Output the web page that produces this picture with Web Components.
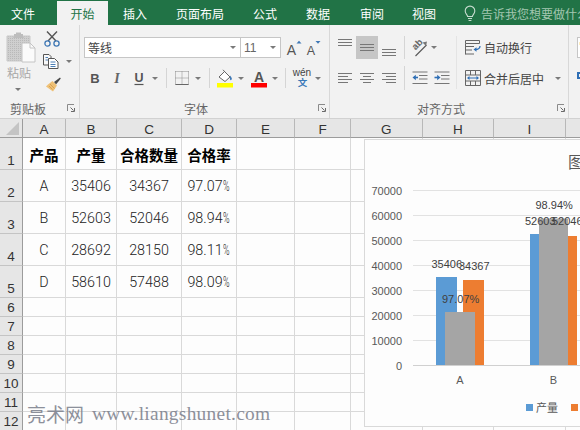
<!DOCTYPE html>
<html lang="zh">
<head>
<meta charset="utf-8">
<title>Excel</title>
<style>
html,body{margin:0;padding:0;width:580px;height:430px;overflow:hidden;background:#fff;font-family:"Liberation Sans","Noto Sans CJK SC",sans-serif}
xl-app{width:580px;height:430px}
</style>
</head>
<body>
<xl-app>
  <xl-tabs slot="tabs"></xl-tabs>
  <xl-ribbon slot="ribbon"></xl-ribbon>
  <xl-sheet slot="sheet"></xl-sheet>
</xl-app>
<script>
const CJK='"Liberation Sans","Noto Sans CJK SC",sans-serif';
function def(name,css,html,init){
  customElements.define(name,class extends HTMLElement{
    connectedCallback(){
      if(this.shadowRoot)return;
      const r=this.attachShadow({mode:'open'});
      r.innerHTML='<style>'+css+'</style>'+(typeof html==='function'?html(this):html);
      if(init)init(r,this);
    }
  });
}
def('xl-app',':host{display:flex;flex-direction:column;overflow:hidden}','<slot name="tabs"></slot><slot name="ribbon"></slot><slot name="sheet"></slot>');

/* ---------- tabs ---------- */
def('xl-tab',`:host{display:flex;flex:none;align-items:center;justify-content:center;height:24px;margin-top:1px;font:12px ${CJK};color:#fff;box-sizing:border-box;white-space:nowrap}
:host([active]){background:#f2f2f2;color:#217346}`,'<slot></slot>');
def('xl-tabs',`:host{display:flex;height:25px;background:#217346;overflow:hidden;flex:none}
.tell{display:flex;flex:none;align-items:center;color:#a3c6b0;font:12px ${CJK};white-space:nowrap;gap:4px;margin-left:27px;padding-top:1px}
svg{display:block}`,`
<xl-tab style="width:46px">文件</xl-tab>
<xl-tab active style="width:51px;margin-left:11px">开始</xl-tab>
<xl-tab style="width:24px;margin-left:15px">插入</xl-tab>
<xl-tab style="width:48px;margin-left:29px">页面布局</xl-tab>
<xl-tab style="width:24px;margin-left:29px">公式</xl-tab>
<xl-tab style="width:24px;margin-left:29px">数据</xl-tab>
<xl-tab style="width:24px;margin-left:30px">审阅</xl-tab>
<xl-tab style="width:24px;margin-left:28px">视图</xl-tab>
<div class="tell"><svg width="14" height="17" viewBox="0 0 14 17" fill="none" stroke="#c7dccf" stroke-width="1.1"><path d="M4.6 11.5C4.4 9.6 2.2 8.6 2.2 5.9A4.8 4.8 0 0 1 11.8 5.9C11.8 8.6 9.6 9.6 9.4 11.5Z"/><path d="M5 13.5H9M5.6 15.5H8.4"/></svg><span>告诉我您想要做什么</span></div>`);

/* ---------- generic ribbon pieces ---------- */
def('xl-caret',`:host{display:flex;align-items:center;justify-content:center;flex:none;height:100%}
i{display:block;width:0;height:0;border:3px solid transparent;border-top:3px solid #7a7a7a;border-bottom:0}`,'<i></i>');
def('xl-vsep',`:host{display:flex;justify-content:center;flex:none;height:100%}
i{display:block;width:1px;background:#d5d5d5;height:100%}`,'<i></i>');
def('xl-launch',`:host{display:block;flex:none;width:8px;height:8px}svg{display:block}`,
 `<svg width="8" height="8" viewBox="0 0 8 8" fill="none" stroke="#8a8a8a"><path d="M.5 7V.5H7"/><path d="M3.5 3.5L6.5 6.5" stroke="#6a6a6a"/><path d="M7.5 4V7.5H4" stroke="#6a6a6a"/></svg>`);
def('xl-group',`:host{display:flex;flex-direction:column;flex:none;height:93px;box-sizing:border-box;border-right:1px solid #d8d8d8}
.b{flex:none;height:74px;display:flex}
.l{display:flex;align-items:center;flex:none;height:18px;font:12px ${CJK};color:#666;box-sizing:border-box}
.l span{flex:1}`,
 t=>`<div class="b"><slot></slot></div><div class="l" style="padding-left:${t.getAttribute('lp')}px;padding-right:${t.getAttribute('rp')}px"><span>${t.getAttribute('label')}</span><xl-launch></xl-launch></div>`);
def('xl-combo',`:host{display:flex;align-items:center;box-sizing:border-box;height:21px;background:#fff;border:1px solid #c6c6c6;font:12px ${CJK};color:#444;flex:none;padding-left:3px}
span{flex:1}xl-caret{width:14px}`,`<span><slot></slot></span><xl-caret></xl-caret>`);
def('xl-row',`:host{display:flex;flex:none}`,'<slot></slot>');

const I={
 paste:`<svg width="30" height="32" viewBox="0 0 30 32"><defs><pattern id="d" width="2" height="2" patternUnits="userSpaceOnUse"><rect width="2" height="2" fill="#cfcfcf"/><rect width="1" height="1" fill="#b9b9b9"/></pattern></defs><path d="M1 4H24V29H1Z" fill="url(#d)" stroke="#c9c9c9"/><path d="M8 4V2H10V0.5H15V2H17V4L18 6H7Z" fill="#bdbdbd"/><path d="M16 11H24L29 16V30H16Z" fill="#fbfbfb" stroke="#c4c4c4"/><path d="M24 11V16H29" fill="none" stroke="#c4c4c4"/></svg>`,
 cut:`<svg width="16" height="16" viewBox="0 0 16 16" fill="none"><path d="M4 10L13 .5M12 10L3 .5" stroke="#555" stroke-width="1.4"/><circle cx="3.5" cy="12.5" r="2.6" stroke="#3f78b5" stroke-width="1.3"/><circle cx="12.5" cy="12.5" r="2.6" stroke="#3f78b5" stroke-width="1.3"/></svg>`,
 copy:`<svg width="16" height="15" viewBox="0 0 16 15" fill="none" stroke="#555"><path d="M.5.5H6L8 2.5V11H.5Z" fill="#f8f8f8"/><path d="M5.5 4.5H11.5L15 8V14.5H5.5Z" fill="#fff"/><path d="M2.5 3.5H5M2.5 6H5M7.5 8H12.5M7.5 10.5H12.5M7.5 12.5H12.5" stroke="#4c7fb5"/></svg>`,
 brush:`<svg width="16" height="16" viewBox="0 0 16 16"><path d="M9 5L15 .5 15.8 1.6 11 7.5Z" fill="#4a4a4a"/><path d="M7.5 4L12 8.5 8 14.5 1 9.5 3 7.5Z" fill="#efc176"/><path d="M5 7L9.5 11.5M4 9L7.5 12.5" stroke="#d39a4a" stroke-width=".8"/></svg>`,
 bold:`<svg width="12" height="14" viewBox="0 0 12 14"><text x="6" y="12" text-anchor="middle" font-family="Liberation Sans" font-weight="700" font-size="13" fill="#555">B</text></svg>`,
 ital:`<svg width="12" height="14" viewBox="0 0 12 14"><text x="6" y="12" text-anchor="middle" font-family="Liberation Serif" font-style="italic" font-weight="700" font-size="14" fill="#666">I</text></svg>`,
 under:`<svg width="12" height="16" viewBox="0 0 12 16"><text x="6" y="11.5" text-anchor="middle" font-family="Liberation Sans" font-weight="700" font-size="12.5" fill="#555">U</text><path d="M1.5 14.5H10.5" stroke="#555" stroke-width="1.2"/></svg>`,
 border:`<svg width="14" height="14" viewBox="0 0 14 14" fill="none"><path d="M.5.5H13.5M.5.5V13.5M13.5.5V13.5M.5 7H13.5M7 .5V13.5" stroke="#8a8a8a" stroke-dasharray="1 1"/><path d="M.5 13.5H13.5" stroke="#666"/></svg>`,
 fill:`<svg width="16" height="19" viewBox="0 0 16 19"><path d="M2 8L7.5 2.5 13 8 8 12.5Z" fill="#fff" stroke="#666"/><path d="M6 .8L8 3" stroke="#666"/><path d="M13 6.5C14.5 8.5 15.5 9.5 14.5 10.8S12.5 10.5 13 8Z" fill="#3f78b5"/><rect y="14" width="16" height="4.5" fill="#ffff00"/></svg>`,
 color:`<svg width="16" height="19" viewBox="0 0 16 19"><text x="8" y="13" text-anchor="middle" font-family="Liberation Sans" font-weight="700" font-size="14" fill="#555">A</text><rect y="14" width="16" height="4.5" fill="#ff0000"/></svg>`,
 wen:`<svg width="20" height="20" viewBox="0 0 20 20"><text x="10" y="7.5" text-anchor="middle" font-family="Liberation Sans" font-size="10" fill="#444">wén</text><text x="10.5" y="18" text-anchor="middle" font-family="Noto Sans CJK SC" font-size="9.5" font-weight="700" fill="#3a78b8">文</text></svg>`,
 grow:`<svg width="16" height="18" viewBox="0 0 16 18"><text x="5.5" y="16" text-anchor="middle" font-family="Liberation Sans" font-size="14" fill="#555">A</text><path d="M10.5 4.5L13 1.8 15.5 4.5Z" fill="#3f78b5"/></svg>`,
 shrink:`<svg width="15" height="18" viewBox="0 0 15 18"><text x="5" y="16" text-anchor="middle" font-family="Liberation Sans" font-size="12.5" fill="#555">A</text><path d="M9.5 2H14.5L12 4.8Z" fill="#3f78b5"/></svg>`,
 vt:l(3,6,9,14),vm:l(8,11,14,14),vb:l(13,16,19,14),
 al:al([14,10,14,10],0),ac:al([14,8,14,8],1),ar:al([14,10,14,10],2),
 orient:`<svg width="17" height="18" viewBox="0 0 17 18" fill="none"><text transform="translate(4.5 11.5) rotate(-45)" font-family="Liberation Sans" font-size="9.5" font-weight="700" fill="#666">ab</text><path d="M4.5 17L15.5 6" stroke="#555" stroke-width="1.1"/><path d="M11.5 3.5L16 2.5 15 7Z" fill="#777"/></svg>`,
 outd:`<svg width="16" height="14" viewBox="0 0 16 14" fill="none"><path d="M.5 1H15.5M7 4.5H15.5M7 8H15.5M.5 12.5H15.5" stroke="#777"/><path d="M6 6.5H2" stroke="#2f6fb5" stroke-width="1.6"/><path d="M.5 6.5L3.8 3.8V9.2Z" fill="#2f6fb5"/></svg>`,
 ind:`<svg width="16" height="14" viewBox="0 0 16 14" fill="none"><path d="M.5 1H15.5M7 4.5H15.5M7 8H15.5M.5 12.5H15.5" stroke="#777"/><path d="M.5 6.5H4" stroke="#2f6fb5" stroke-width="1.6"/><path d="M6.5 6.5L3.2 3.8V9.2Z" fill="#2f6fb5"/></svg>`,
 wrap:`<svg width="16" height="15" viewBox="0 0 16 15" fill="none"><path d="M.5.5H14.5V3.5H.5Z" stroke="#666"/><path d="M.5 3.5V14.5M.5 6.5H9M.5 10H7M.5 14H9" stroke="#666"/><path d="M15 6C15 9 13 9.5 10 9.5" stroke="#2f6fb5" stroke-width="1.3"/><path d="M8.5 9.5L11.5 7.3V11.7Z" fill="#2f6fb5"/></svg>`,
 merge:`<svg width="16" height="16" viewBox="0 0 16 16" fill="none"><path d="M.5.5H15.5V15.5H.5ZM.5 5H15.5M.5 11H15.5M5.5.5V5M10.5.5V5M5.5 11V15.5M10.5 11V15.5" stroke="#666"/><path d="M3 8H13" stroke="#2f6fb5"/><path d="M2 8L4.5 6V10ZM14 8L11.5 6V10Z" fill="#2f6fb5"/></svg>`
};
function l(a,b,c,w){return `<svg width="${w}" height="23" viewBox="0 0 ${w} 23" fill="none" stroke="#777"><path d="M0 ${a+.5}H${w}M0 ${b+.5}H${w}M0 ${c+.5}H${w}"/></svg>`}
function al(ws,m){let d='';ws.forEach((w,i)=>{const x=m==0?0:m==1?(14-w)/2:14-w;d+=`M${x} ${i*3+1.5}H${x+w}`});return `<svg width="14" height="13" viewBox="0 0 14 13" fill="none" stroke="#777"><path d="${d}"/></svg>`}

def('xl-ico',`:host{display:flex;align-items:center;justify-content:center;flex:none;height:100%;box-sizing:border-box}
:host([on]){background:#c6c6c6}svg{display:block}`,t=>I[t.getAttribute('n')]);

/* ---------- ribbon ---------- */
def('xl-ribbon',`:host{display:flex;height:94px;background:#f2f2f2;border-bottom:1px solid #d2d2d2;box-sizing:border-box;flex:none;overflow:hidden}
.clip{display:grid;grid-template-columns:41px 38px;width:79px}
.clipL{display:flex;flex-direction:column;align-items:flex-start;padding:7px 0 0 6px;box-sizing:border-box}
.clipL span{font:12px ${CJK};color:#a8a8a8;margin-top:2px;line-height:16px;margin-left:1px}
.clipL xl-caret{height:8px;width:24px;margin-top:3px}
.clipR{display:flex;flex-direction:column;padding-top:6px;box-sizing:border-box}
.clipR xl-row{height:16px}
.col{display:flex;flex-direction:column}
.font{padding:12px 0 0 4px;box-sizing:border-box;width:100%}
.r1{height:21px;margin-bottom:10px}
.r2{height:20px}
.combo1{width:157px}.combo2{width:41px;margin-left:-1px;color:#666}
.al{padding-left:4px;display:flex;width:100%;box-sizing:border-box}
.a1{height:23px;margin-top:11px}.a2{height:24px;margin-top:7px}
.txt{display:flex;align-items:center;gap:3px;font:12px ${CJK};color:#444;height:100%;white-space:nowrap}
.lsep{flex:none;margin:11px 3px 10px 3px;width:1px;background:#e4e4e4}
.rest{width:20px;flex:none;padding:12px 0 0 8px;box-sizing:border-box}
.box{height:21px;width:40px;background:#fff;border:1px solid #c6c6c6;box-sizing:border-box;font:12px ${CJK};color:#444;padding-left:1px;line-height:19px;white-space:nowrap;overflow:hidden}
.blue{display:block;width:12px;height:7px;border:2px solid #2f6fb5;margin-top:14px;box-sizing:border-box}`,`
<xl-group label="剪贴板" lp="10" rp="4" style="width:80px">
 <div class="clip">
  <div class="clipL"><xl-ico n="paste" style="height:32px"></xl-ico><span>粘贴</span><xl-caret></xl-caret></div>
  <div class="clipR">
   <xl-row style="margin-left:3px"><xl-ico n="cut"></xl-ico></xl-row>
   <xl-row style="margin:6px 0 0 2px"><xl-ico n="copy"></xl-ico><xl-caret style="width:20px"></xl-caret></xl-row>
   <xl-row style="margin:8px 0 0 4px"><xl-ico n="brush"></xl-ico></xl-row>
  </div>
 </div>
</xl-group>
<xl-group label="字体" lp="104" rp="3" style="width:250px">
 <div class="font">
  <xl-row class="r1"><xl-combo class="combo1">等线</xl-combo><xl-combo class="combo2">11</xl-combo>
   <xl-ico n="grow" style="width:22px;margin-left:2px"></xl-ico><xl-ico n="shrink" style="width:17px"></xl-ico></xl-row>
  <xl-row class="r2">
   <xl-ico n="bold" style="width:21px"></xl-ico><xl-ico n="ital" style="width:23px"></xl-ico><xl-ico n="under" style="width:21px"></xl-ico><xl-caret style="width:12px"></xl-caret>
   <xl-vsep style="width:10px"></xl-vsep>
   <xl-ico n="border" style="width:21px"></xl-ico><xl-caret style="width:12px"></xl-caret>
   <xl-vsep style="width:10px"></xl-vsep>
   <xl-ico n="fill" style="width:22px"></xl-ico><xl-caret style="width:10px"></xl-caret>
   <xl-ico n="color" style="width:25px"></xl-ico><xl-caret style="width:8px"></xl-caret>
   <xl-vsep style="width:12px"></xl-vsep>
   <xl-ico n="wen" style="width:22px"></xl-ico><xl-caret style="width:10px"></xl-caret>
  </xl-row>
 </div>
</xl-group>
<xl-group label="对齐方式" lp="87" rp="3" style="width:239px">
 <div class="al">
  <div class="col">
   <xl-row class="a1"><xl-ico n="vt" style="width:22px"></xl-ico><xl-ico n="vm" on style="width:22px"></xl-ico><xl-ico n="vb" style="width:22px"></xl-ico><xl-vsep style="width:8px"></xl-vsep><xl-ico n="orient" style="width:23px"></xl-ico><xl-caret style="width:6px"></xl-caret></xl-row>
   <xl-row class="a2"><xl-ico n="al" style="width:22px"></xl-ico><xl-ico n="ac" style="width:22px"></xl-ico><xl-ico n="ar" style="width:22px"></xl-ico><xl-vsep style="width:8px"></xl-vsep><xl-ico n="outd" style="width:23px"></xl-ico><xl-ico n="ind" style="width:22px"></xl-ico></xl-row>
  </div>
  <i class="lsep"></i>
  <div class="col" style="margin-left:5px">
   <xl-row class="a1"><div class="txt"><xl-ico n="wrap"></xl-ico><span>自动换行</span></div></xl-row>
   <xl-row class="a2"><div class="txt"><xl-ico n="merge"></xl-ico><span>合并后居中</span><xl-caret style="width:22px"></xl-caret></div></xl-row>
  </div>
 </div>
</xl-group>
<div class="rest"><div class="box">常规</div><i class="blue"></i></div>`);

/* ---------- sheet ---------- */
def('xl-sheet',`:host{display:block;position:relative;height:311px;overflow:hidden;flex:none;background:#fdfdfd}
.g{display:grid;grid-template-columns:23px 43px 51px 65px 55px 58px 56px 71.5px 71.5px 72px 72px;grid-template-rows:19px repeat(5,32px) repeat(7,19px);width:700px}
.g>div{box-sizing:border-box;border-right:1px solid #d9d9d9;border-bottom:1px solid #d9d9d9;display:flex;align-items:center;justify-content:center;font:300 14.3px Roboto,"Noto Sans CJK SC",sans-serif;color:#222;padding-top:1px}
.g>.h{background:#e6e6e6;border-right:1px solid #b8b8b8;border-bottom:1px solid #9c9c9c;font:13.5px ${CJK};color:#333;padding-top:2px}
.g>.rh{background:#e6e6e6;border-right:1px solid #9c9c9c;border-bottom:1px solid #c4c4c4;font:13.5px ${CJK};color:#333;align-items:flex-end;padding:0 0 1px}
.g>.b{font:700 14.5px ${CJK};color:#000}
.g>.corner{background:#e6e6e6;border-right:1px solid #9c9c9c;border-bottom:1px solid #9c9c9c;padding:0 3px 2px 0;align-items:flex-end;justify-content:flex-end}
.corner i{display:block;width:0;height:0;border-left:13px solid transparent;border-bottom:13px solid #c4c4c4}
.pc{display:inline-block;width:8px;transform:scaleX(.62);transform-origin:left center}
.wm{position:absolute;left:27px;top:282px;white-space:nowrap;color:#7d828e;opacity:.88;font:19.4px "Liberation Serif","Noto Sans CJK SC",serif;letter-spacing:.27px;line-height:26px;display:flex;gap:8px}
.wm b{font:400 19px "Noto Sans CJK SC",sans-serif;line-height:26px;letter-spacing:0}
xl-chart{position:absolute;left:364px;top:20px}`,`<div class="g"></div><xl-chart></xl-chart><div class="wm"><b>亮术网</b><span>www.liangshunet.com</span></div>`,
(r)=>{
 const g=r.querySelector('.g');
 const cols=['A','B','C','D','E','F','G','H','I',''];
 const data=[['产品','产量','合格数量','合格率'],['A','35406','34367','97.07%'],['B','52603','52046','98.94%'],['C','28692','28150','98.11%'],['D','58610','57488','98.09%']];
 let h='<div class="corner"><i></i></div>';
 cols.forEach(c=>h+=`<div class="h">${c}</div>`);
 for(let i=0;i<12;i++){
  h+=`<div class="rh">${i+1}</div>`;
  for(let j=0;j<10;j++){
   let v=(data[i]&&data[i][j])||'';
   if(v.endsWith('%'))v=v.slice(0,-1)+'<span class="pc">%</span>';
   h+=`<div class="${i==0&&j<4?'b':''}">${v}</div>`;
  }
 }
 g.innerHTML=h;
});

/* ---------- chart: free canvas, page coordinates in the viewBox ---------- */
def('xl-chart',`:host{display:block;width:217px;height:288px;background:#fdfdfd;box-sizing:border-box;border:1px solid #d9d9d9;border-right:0}
svg{display:block}text{font-family:"Liberation Sans","Noto Sans CJK SC",sans-serif}`,
()=>{
 const Y=[70000,60000,50000,40000,30000,20000,10000,0];
 let s='<svg width="216" height="286" viewBox="365 140 216 286">';
 s+='<text x="568" y="168" font-size="16" fill="#595959">图表标题</text>';
 Y.forEach((v,i)=>{const y=190.5+i*25;
  s+=`<path d="M413 ${y}H581" stroke="${i==7?'#d0d0d0':'#e2e2e2'}"/>`;
  s+=`<text x="402" y="${y+4}" text-anchor="end" font-size="11" fill="#595959">${v}</text>`;});
 const bar=(x,w,t,c)=>`<rect x="${x}" y="${t}" width="${w}" height="${365-t}" fill="${c}"/>`;
 s+=bar(436,21,277,'#5b9bd5')+bar(463,21,280,'#ed7d31')+bar(445,30,312,'#a5a5a5');
 s+=bar(530,21,234,'#5b9bd5')+bar(556,21,236,'#ed7d31')+bar(539,29,218.5,'#a5a5a5');
 const lab=(x,y,t)=>`<text x="${x}" y="${y}" font-size="11" fill="#404040">${t}</text>`;
 s+=lab(431.5,268,'35406')+lab(459,270,'34367')+lab(442,303,'97.07%');
 s+=lab(535.5,209,'98.94%')+lab(525,225,'52603')+lab(552,225,'52046');
 s+='<text x="460" y="384" text-anchor="middle" font-size="11" fill="#595959">A</text><text x="553.5" y="384" text-anchor="middle" font-size="11" fill="#595959">B</text>';
 s+='<rect x="526" y="404" width="7" height="7" fill="#5b9bd5"/><text x="536" y="412" font-size="11" fill="#595959">产量</text><rect x="571" y="404" width="7" height="7" fill="#ed7d31"/>';
 return s+'</svg>';
});
</script>
</body>
</html>
